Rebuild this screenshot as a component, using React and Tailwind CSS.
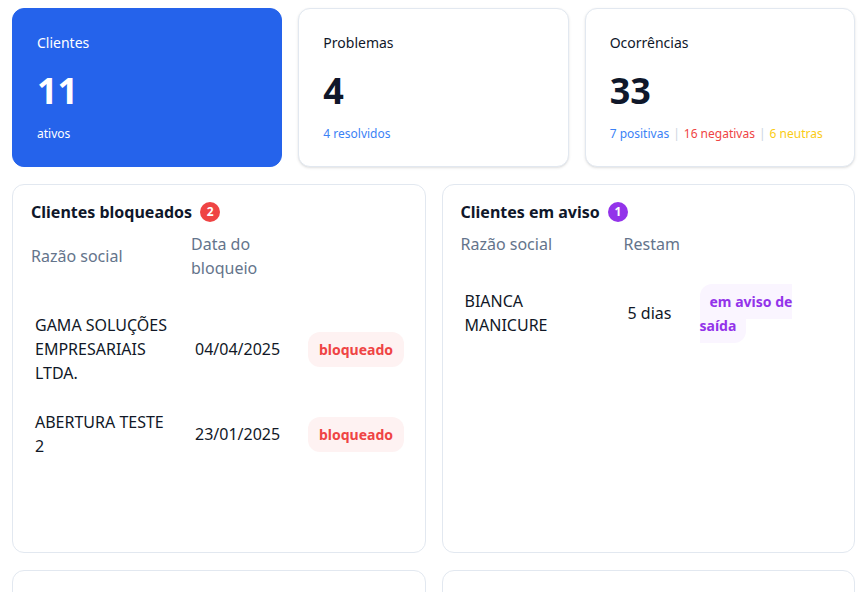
import React from 'react';

const stats = [
  { label: 'Clientes', value: '11', note: 'ativos', primary: true },
  { label: 'Problemas', value: '4', note: '4 resolvidos' },
  { label: 'Ocorrências', value: '33', breakdown: true },
];

const blocked = [
  { name: 'GAMA SOLUÇÕES EMPRESARIAIS LTDA.', date: '04/04/2025' },
  { name: 'ABERTURA TESTE 2', date: '23/01/2025' },
];

const warned = [{ name: 'BIANCA MANICURE', left: '5 dias' }];

const StatCard = ({ stat }) => (
  <div
    className={`h-[159px] rounded-xl border px-6 pt-6 ${
      stat.primary
        ? 'bg-[#2563eb] border-[#2563eb] text-white'
        : 'bg-white border-[#e2e8f0] shadow-sm text-[#0f172a]'
    }`}
  >
    <div className="text-sm">{stat.label}</div>
    <div className="mt-[18px] text-4xl font-bold">{stat.value}</div>
    <div className="mt-[15px] text-xs">
      {stat.breakdown ? (
        <>
          <span className="text-[#3b82f6]">7 positivas</span>
          <span className="mx-1 text-[#cbd5e1]">|</span>
          <span className="text-[#ef4444]">16 negativas</span>
          <span className="mx-1 text-[#cbd5e1]">|</span>
          <span className="text-[#facc15]">6 neutras</span>
        </>
      ) : (
        <span className={stat.primary ? 'text-white' : 'text-[#3b82f6]'}>{stat.note}</span>
      )}
    </div>
  </div>
);

const Panel = ({ title, count, badgeColor, children }) => (
  <div className="h-[369px] rounded-xl border border-[#e2e8f0] bg-white px-[18px] pt-[15px]">
    <div className="flex h-6 items-center gap-2">
      <h3 className="text-base font-bold text-[#0f172a]">{title}</h3>
      {count != null && (
        <span className={`flex h-5 w-5 items-center justify-center rounded-full text-xs font-bold text-white ${badgeColor}`}>
          {count}
        </span>
      )}
    </div>
    {children}
  </div>
);

export default function App() {
  return (
    <div className="min-h-screen bg-white pl-3 pr-[10px] pt-2 font-['Noto_Sans',sans-serif] text-[#111827]">
      <div className="grid grid-cols-3 gap-4">
        {stats.map((s) => (
          <StatCard key={s.label} stat={s} />
        ))}
      </div>

      <div className="mt-[17px] grid grid-cols-2 gap-4">
        <Panel title="Clientes bloqueados" count={2} badgeColor="bg-[#ef4444]">
          <table className="mt-2 w-full table-fixed text-base">
            <colgroup>
              <col className="w-[160px]" />
              <col className="w-[113px]" />
              <col />
            </colgroup>
            <thead>
              <tr className="text-left text-[#64748b]">
                <th className="pb-[21px] font-normal">Razão social</th>
                <th className="pb-[21px] font-normal">Data do bloqueio</th>
                <th className="pb-[21px] font-normal"></th>
              </tr>
            </thead>
            <tbody>
              {blocked.map((c) => (
                <tr key={c.name}>
                  <td className="pt-3 pb-[13px] pl-1 pr-5">{c.name}</td>
                  <td className="pt-3 pb-[13px] pl-1">{c.date}</td>
                  <td className="pt-3 pb-[13px] pl-1">
                    <span className="rounded-xl bg-[#fef2f2] px-[11px] py-2 text-sm font-bold text-[#ef4444]">
                      bloqueado
                    </span>
                  </td>
                </tr>
              ))}
            </tbody>
          </table>
        </Panel>

        <Panel title="Clientes em aviso" count={1} badgeColor="bg-[#9333ea]">
          <table className="mt-2 w-full table-fixed text-base">
            <colgroup>
              <col className="w-[163px]" />
              <col className="w-[72px]" />
              <col />
            </colgroup>
            <thead>
              <tr className="text-left text-[#64748b]">
                <th className="pb-[21px] font-normal">Razão social</th>
                <th className="pb-[21px] font-normal">Restam</th>
                <th className="pb-[21px] font-normal"></th>
              </tr>
            </thead>
            <tbody>
              {warned.map((c) => (
                <tr key={c.name}>
                  <td className="pt-3 pb-[13px] pl-1 pr-5">{c.name}</td>
                  <td className="pt-3 pb-[13px] pl-1">{c.left}</td>
                  <td className="pt-3 pb-[13px] pl-1 pr-5">
                    <span className="rounded-xl bg-[#faf5ff] px-2.5 py-2 text-sm font-bold text-[#9333ea]">
                      em aviso de saída
                    </span>
                  </td>
                </tr>
              ))}
            </tbody>
          </table>
        </Panel>
      </div>

      <div className="mt-[17px] grid grid-cols-2 gap-4 pb-4">
        <Panel title="" />
        <Panel title="" />
      </div>
    </div>
  );
}
